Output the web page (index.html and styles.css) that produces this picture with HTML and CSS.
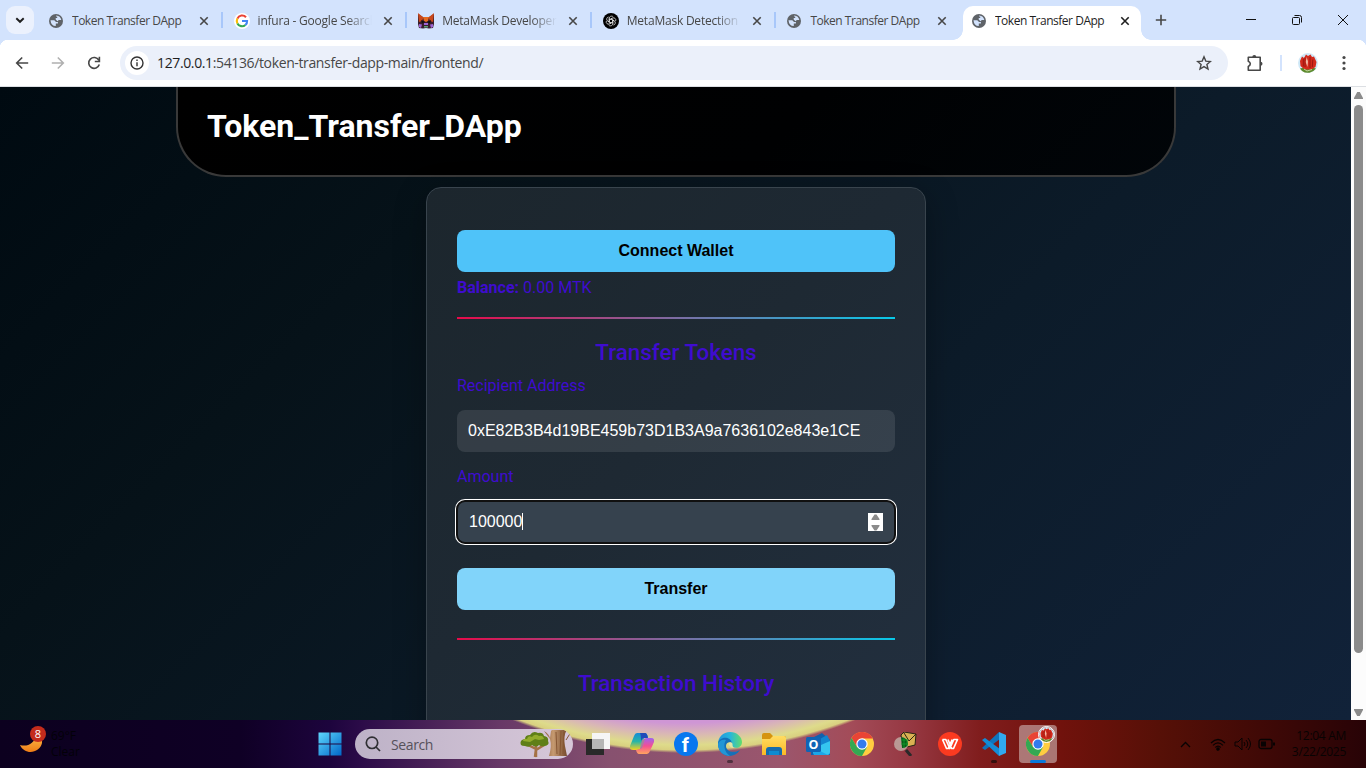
FILE: index.html
```html
<!DOCTYPE html>
<html lang="en">
<head>
<meta charset="utf-8">
<title>Token Transfer DApp</title>
<link rel="stylesheet" href="styles.css">
</head>
<body>
<svg class="defs" width="0" height="0">
  <defs>
    <linearGradient id="win" x1="0" y1="0" x2="1" y2="1"><stop offset="0" stop-color="#5fd7fd"/><stop offset="1" stop-color="#0067c8"/></linearGradient>
    <linearGradient id="moon" x1="0" y1="0" x2="0" y2="1"><stop offset="0" stop-color="#ffc04d"/><stop offset="1" stop-color="#ee7d16"/></linearGradient>
    <linearGradient id="edgeA" x1="0" y1="0" x2="1" y2="0"><stop offset="0" stop-color="#2395dd"/><stop offset=".5" stop-color="#26b5dc"/><stop offset="1" stop-color="#62dd6b"/></linearGradient>
    <linearGradient id="folder" x1="0" y1="0" x2="0" y2="1"><stop offset="0" stop-color="#ffdc62"/><stop offset="1" stop-color="#fbb924"/></linearGradient>
    <linearGradient id="copA" x1="0" y1="0" x2="0" y2="1"><stop offset="0" stop-color="#168bd8"/><stop offset=".5" stop-color="#29b5a6"/><stop offset="1" stop-color="#f5d021"/></linearGradient>
    <linearGradient id="copB" x1="0" y1="0" x2="0" y2="1"><stop offset="0" stop-color="#9d62ef"/><stop offset=".5" stop-color="#f44f93"/><stop offset="1" stop-color="#ffa55d"/></linearGradient>
    <linearGradient id="trunk" x1="0" y1="0" x2="1" y2="0"><stop offset="0" stop-color="#8a5c3c"/><stop offset=".4" stop-color="#c69a70"/><stop offset="1" stop-color="#764a2d"/></linearGradient>
    <symbol id="globe" viewBox="0 0 14 14"><circle cx="7" cy="7" r="7" fill="#5f6368"/><path d="M1.500 6.300h3.800l1.700 1.600h1.900v1.700H6.800v2.500Q2 12 1.500 6.300M7.200 1.600q4.300.4 5.100 4.400H9.800L8.500 7.200 6.700 5.400V4h1.500V2.600H7z" fill="#d3e3fd"/></symbol>
    <symbol id="x" viewBox="0 0 10 10"><path d="M1.300 1.300 8.700 8.700M8.700 1.300 1.300 8.700" stroke="currentColor" stroke-width="1.600"/></symbol>
    <symbol id="chrome" viewBox="0 0 24 24"><circle cx="12" cy="12" r="12" fill="#ffcd40"/><path d="M12 6.500h10.700A12 12 0 0 0 1.600 6L7 15z" fill="#e94435"/><path d="M1.600 6A12 12 0 0 0 12 24l5-9-5-3-5 3z" fill="#34a853"/><circle cx="12" cy="12" r="5.700" fill="#fff"/><circle cx="12" cy="12" r="4.500" fill="#337bed"/></symbol>
    <symbol id="tulip" viewBox="0 0 20 20"><circle cx="10" cy="10" r="10" fill="#cfe8f7"/><path d="M2 15.500Q10 13 18 15.500A10 10 0 0 1 4 18z" fill="#5d8a2c"/><path d="M2 8 4 3.500 6 5l2-3.500L10 3l2.500-1.500L14 4l2-.5L18.500 9l-1 5-4 2.500h-7L2.500 13z" fill="#d32a1c"/><path d="M8.700 4 10 8.500 9.500 14 7.600 9z" fill="#f3b7a3"/><path d="M5.300 6v7.500M12 4v11M14.800 6.500 14.300 14M7 4.500v9.500" stroke="#8d120e" stroke-width=".8"/><path d="m6 16 3 2 5-1.500" stroke="#c3d49b" fill="none"/></symbol>
  </defs>
</svg>

<div class="screen">
  <header class="tabstrip">
    <div class="tab-search"><svg width="10" height="10" viewBox="0 0 10 10"><path d="m1.300 3.200 3.700 3.600 3.700-3.600" fill="none" stroke="#1f1f1f" stroke-width="1.900"/></svg></div>
    <div class="tabs">
      <div class="tab"><svg class="fav"><use href="#globe"/></svg><span class="tab-title">Token Transfer DApp</span><svg class="close"><use href="#x"/></svg></div>
      <div class="tab"><svg class="fav big" viewBox="0 0 16 16"><circle cx="8" cy="8" r="8" fill="#fff"/><g fill="none" stroke-width="2.100"><path d="M12 4.200A5.200 5.200 0 0 0 3.400 5.600" stroke="#ea4335"/><path d="M3.400 5.600a5.200 5.200 0 0 0 0 4.800" stroke="#fbbc05"/><path d="M3.400 10.400a5.200 5.200 0 0 0 8 1.600" stroke="#34a853"/><path d="M11.400 12A5 5 0 0 0 13.100 8H8" stroke="#4285f4"/></g></svg><span class="tab-title fade">infura - Google Search</span><svg class="close"><use href="#x"/></svg></div>
      <div class="tab"><svg class="fav big" viewBox="0 0 16 16"><path d="m0 1 5 3h6l5-3v10l-1 4-4 .5-3-.5-3 .5-4-.5-1-4z" fill="#3a1d2c"/><path d="m0 0 5.500 4.500L4 8 1 9zM16 0l-5.500 4.500L12 8l3 1z" fill="#c9481c"/><path d="M5 4h6l-1 4-2 1-2-1z" fill="#e66a20"/><path d="m3 7 4 2-3 1.500zm10 0L9 9l3 1.500z" fill="#100c12"/><path d="m1 11 3 .5-1 3.500-2-1zm14 0-3 .5 1 3.500 2-1zM6 10h4v2H6z" fill="#9c63d4"/><path d="M6 13h4v1.500H6z" fill="#5aa078"/></svg><span class="tab-title fade">MetaMask Developer</span><svg class="close"><use href="#x"/></svg></div>
      <div class="tab"><svg class="fav big" viewBox="0 0 16 16"><circle cx="8" cy="8" r="8" fill="#000"/><g fill="none" stroke="#e8e8e8" stroke-width=".7"><path id="petal" d="M6.300 9V5.200a2.200 2.200 0 0 1 4-1.200M6.300 6.900 9.500 5"/><use href="#petal" transform="rotate(60 8 8)"/><use href="#petal" transform="rotate(120 8 8)"/><use href="#petal" transform="rotate(180 8 8)"/><use href="#petal" transform="rotate(240 8 8)"/><use href="#petal" transform="rotate(300 8 8)"/></g></svg><span class="tab-title fade">MetaMask Detection</span><svg class="close"><use href="#x"/></svg></div>
      <div class="tab"><svg class="fav"><use href="#globe"/></svg><span class="tab-title">Token Transfer DApp</span><svg class="close"><use href="#x"/></svg></div>
      <div class="tab active"><svg class="fav"><use href="#globe"/></svg><span class="tab-title">Token Transfer DApp</span><svg class="close"><use href="#x"/></svg></div>
    </div>
    <svg class="newtab" width="12" height="12" viewBox="0 0 12 12"><path d="M6 .8v10.400M.8 6h10.400" stroke="#474747" stroke-width="1.600"/></svg>
    <div class="window-controls">
      <svg width="12" height="12"><path d="M1 5.500h10" stroke="#111"/></svg>
      <svg width="12" height="12" fill="none" stroke="#111"><rect x="1.500" y="3.500" width="7" height="7" rx="1"/><path d="M3.500 1.500h5a2 2 0 0 1 2 2v5"/></svg>
      <svg width="12" height="12"><path d="m1 1 10 10M11 1 1 11" stroke="#111"/></svg>
    </div>
  </header>

  <div class="toolbar">
    <svg width="14" height="14" class="nav"><path d="M13.200 7H2M7.200 1.500 1.700 7l5.500 5.500" fill="none" stroke="#474747" stroke-width="1.600"/></svg>
    <svg width="14" height="14" class="nav"><path d="M.8 7H12M6.800 1.500 12.300 7l-5.500 5.500" fill="none" stroke="#b0b0b0" stroke-width="1.600"/></svg>
    <svg width="14" height="14" class="nav"><path d="M11.800 4.200A5.400 5.400 0 1 0 12.300 8.500M12.400.8v4.700H7.800" fill="none" stroke="#474747" stroke-width="1.600"/></svg>
    <div class="omnibox">
      <span class="site-info"><svg width="14" height="14" fill="none" stroke="#333" stroke-width="1.400"><circle cx="7" cy="7" r="6"/><path d="M7 6.200v4M7 3.400v1.600"/></svg></span>
      <span class="url"><b>127.0.0.1</b>:54136/token-transfer-dapp-main/frontend/</span>
      <svg class="star" width="16" height="16"><path d="m8 1.800 1.800 4.300 4.600.4-3.500 3 1.100 4.500L8 11.600 4 14l1.100-4.500-3.500-3 4.600-.4z" fill="none" stroke="#474747" stroke-width="1.400"/></svg>
    </div>
    <svg class="puzzle" width="18" height="18"><path d="M2.300 3.300h11.900v12.900H2.300v-3.800q2-.9 2-2.600t-2-2.600z" fill="none" stroke="#474747" stroke-width="1.600" stroke-linejoin="round"/><path d="M6.300 3a2 2 0 0 1 4 0zM14.500 7.700a2 2 0 0 1 0 4z" fill="#474747"/></svg>
    <i class="divider"></i>
    <svg class="profile" width="20" height="20"><use href="#tulip"/></svg>
    <svg class="dots" width="4" height="16" fill="#474747"><circle cx="2" cy="2.500" r="1.600"/><circle cx="2" cy="8" r="1.600"/><circle cx="2" cy="13.500" r="1.600"/></svg>
  </div>

  <div class="viewport">
    <main class="page">
      <div class="banner"><h1>Token_Transfer_DApp</h1></div>
      <section class="card">
        <div class="button">Connect Wallet</div>
        <p class="balance"><strong>Balance:</strong> 0.00 MTK</p>
        <div class="rule"></div>
        <h2>Transfer Tokens</h2>
        <label>Recipient Address</label>
        <div class="field">0xE82B3B4d19BE459b73D1B3A9a7636102e843e1CE</div>
        <label class="second">Amount</label>
        <div class="field focused"><span class="typed">100000</span><svg class="spinner" width="15" height="18"><rect width="15" height="18" fill="#fff"/><path d="M3.500 7h8V6l-3-4.500h-2l-3 4.500zM3.500 12h8v1l-3 4.500h-2l-3-4.500z" fill="#8b8b8b"/></svg></div>
        <div class="button hover">Transfer</div>
        <div class="rule last"></div>
        <h2 class="history">Transaction History</h2>
      </section>
    </main>
    <aside class="scrollbar">
      <svg width="9" height="7"><path d="M0 7V6L3.200 0h2.600L9 6v1z" fill="#8b8b8b"/></svg>
      <div class="thumb"></div>
      <svg width="9" height="7"><path d="M0 0v1l3.200 6h2.600L9 1V0z" fill="#8b8b8b"/></svg>
    </aside>
  </div>

  <footer class="taskbar">
    <div class="weather">
      <svg class="moon" width="24" height="30"><path d="M0 19C7 21 15 18 16 8Q23 10 22 17C20 27 5 30 0 19z" fill="url(#moon)"/></svg>
      <span class="badge">8</span>
      <div class="weather-text"><span>69°F</span><span>Clear</span></div>
    </div>
    <svg class="start" width="24" height="24" viewBox="0 0 24 24"><path d="M.5.5h11v11H.5zM12.500.5h11v11h-11zM.5 12.500h11v11H.5zM12.500 12.500h11v11h-11z" fill="url(#win)"/></svg>
    <div class="search">
      <svg width="16" height="16" fill="none" stroke="#303034" stroke-width="1.700"><circle cx="7" cy="6.800" r="5.700"/><path d="m11 11 4 4"/></svg>
      <span>Search</span>
      <svg class="trees" width="54" height="30" viewBox="0 0 54 30">
        <path d="m15 28 1-8-8-4m8 5 8-5m-8 1v11" stroke="#a47145" stroke-width="2.500" fill="none"/>
        <path d="M1 16q-2-5 4-6 0-4 5-4 3-5 8-2 5-1 6 3 5 1 4 5 2 4-3 5-4 1-6-1-3 3-7 0-3 3-7 1-3 0-4-1" fill="#5f7f18"/><path d="M3 12q0-3 4-2 1-4 5-2 3-4 7-1 4-1 5 3l-5 1-4-1-5 3z" fill="#93ac2c"/>
        <path d="m31 2 1-1h15q-4 5-2 16l2 10H29q3-10 1-17l-6-8q5 3 6 7z" fill="url(#trunk)"/><path d="m36 3 1 22m4-23-1 24m4-23-1 22M51 3l-5 8" stroke="#865633" fill="none"/>
      </svg>
    </div>
    <div class="apps">
      <svg viewBox="0 0 24 24"><path d="M6 1h18v16H6z" fill="#f5f5f5"/><path d="M0 7h18v16H0z" fill="#292929"/><path d="M6 7h12v10H6z" fill="#b5b5b5"/></svg>
      <svg viewBox="0 0 24 24"><path d="M7 1h8q2 0 3 4l-4 1-3 9q-1 3-4 3H3q-4 0-3-4l4-10q1-3 3-3z" fill="url(#copA)"/><path d="M10 1h5q2 0 3 5h-4q-2 0-3 3 0-6-1-8" fill="#214bb9"/><path d="M17 22H9q-2 0-3-4l4-1 3-9q1-2 4-2h4q4 0 3 4l-4 9q-1 3-3 3z" fill="url(#copB)"/><path d="m12 8 3-1-3 9-2 1z" fill="#a87f9b"/></svg>
      <svg viewBox="0 0 24 24"><circle cx="12" cy="12" r="12" fill="#0877ef"/><text x="7.800" y="19.500" font-size="20" font-family="Roboto" font-weight="700" fill="#fff">f</text></svg>
      <svg viewBox="0 0 24 24"><path d="M0 12C0 5 5 0 12 0s12 5 12 10c0 5-5 7-9 5-2-1 0-2-1-4-2-5-12-3-14 4z" fill="url(#edgeA)"/><path d="M0 12c0-7 12-9 14-1-3-2-6 0-6 3 0 5 7 8 14 4-4 6-10 7-15 5-4-2-7-6-7-11" fill="#1570b8"/><path d="M8 8c-3 4-2 12 4 16-7 0-12-5-12-12 1-3 4-5 8-4" fill="#2296d6"/><path d="M14 11c-2-2-4 0-3 2s3 3 5 2.500c-2-1-1-2-2-4.500" fill="#dfe5a8"/></svg>
      <svg viewBox="0 0 24 24"><path d="M0 3q0-2 2-2h6l3 3h11q2 0 2 2v5H0z" fill="#d5940e"/><path d="M0 7h8l3-3h11q2 0 2 2v17H0z" fill="url(#folder)"/><path d="M4 23v-5q0-3 3-3h10q3 0 3 3v5z" fill="#156cac"/><path d="M7 19h10v4H7z" fill="#0d8bd1"/></svg>
      <svg viewBox="0 0 24 24"><path d="M4 7 16 1l8 7v15H5z" fill="#1261ad"/><path d="m7 11 14-8 3 6-12 8z" fill="#1385d0"/><path d="m6 17 18-8v11q0 3-3 3H8z" fill="#35c5f0"/><path d="m6 15 16 8H8z" fill="#1ba6e8"/><rect y="5" width="15" height="15" rx="1.500" fill="#1064b5"/><text x="2.600" y="16.800" font-size="12.500" font-family="Open Sans" font-weight="700" fill="#fff">O</text></svg>
      <svg><use href="#chrome"/></svg>
      <svg viewBox="0 0 24 24"><path d="m7 3 3-3 12 2-1 11-12 3z" fill="#d9b152" stroke="#282414"/><path d="m10 1 5 8 7-7" fill="none" stroke="#2d2614"/><circle cx="7" cy="12" r="7" fill="#b99994"/><path d="M7 5q7 1 7 7-1 4-6 4z" fill="#075e17"/><path d="M7 8h7M7 12h7M10 6v10m3-9v7" stroke="#18a72e" stroke-width=".7"/><path d="m12 18 5 6" stroke="#292929" stroke-width="3"/></svg>
      <svg viewBox="0 0 24 24"><circle cx="12" cy="12" r="12" fill="#fb3a20"/><path d="M4.500 7.500h3.300l4 9 4-9h3.700l-4 9h-1.800L10 7.500M4.500 7.500l4 9h1.700l4-9" fill="none" stroke="#fff" stroke-width="1.700" stroke-linejoin="round"/></svg>
      <svg viewBox="0 0 24 24"><path d="m17 0 1 7L3 18l-3-2z" fill="#0f74bd"/><path d="m0 8 3-2 15 11-1 7z" fill="#148cd6"/><path d="m17 0 7 3v18l-7 3z" fill="#32a9ef"/></svg>
      <div class="current"><svg><use href="#chrome"/></svg><svg class="mini" viewBox="0 0 20 20"><use href="#tulip"/></svg><i></i></div>
    </div>
    <i class="running edge-run"></i><i class="running code-run"></i>
    <div class="tray">
      <svg width="11" height="7"><path d="m1 6 4.500-4.500L10 6" fill="none" stroke="#080303" stroke-width="1.300"/></svg>
      <svg class="wifi" width="16" height="13" fill="none" stroke="#080303" stroke-width="1.200"><path d="M1 5q7-7 14 0M3 7.300q5-5 10 0M5.300 9.500q2.700-2.700 5.400 0"/><circle cx="8" cy="11" r="1.200" fill="#080303"/></svg>
      <svg class="vol" width="17" height="14" fill="none" stroke="#080303"><path d="M1 5h3l4-4v12L4 9H1zM10 5q2 2 0 4m2-6q3.500 4 0 8m2-10q5 6 0 12"/></svg>
      <svg class="battery" width="17" height="12"><rect x="1" y="1.500" width="13" height="9" rx="2" fill="none" stroke="#080303" stroke-width="1.300"/><path d="M3 3.500h5v5H3zM15 4.500h2v3h-2z" fill="#080303"/></svg>
      <div class="clock"><span>12:04 AM</span><span>3/22/2025</span></div>
    </div>
  </footer>
</div>
</body>
</html>
```

FILE: styles.css
```css
* { box-sizing: border-box; }
body { margin: 0; font-family: "Open Sans", sans-serif; overflow: hidden; }
svg { display: block; flex: none; }
.defs { position: absolute; }
.screen { width: 1366px; height: 768px; display: flex; flex-direction: column; background: #fff; }

/* Tab strip */
.tabstrip { height: 40px; flex: none; display: flex; align-items: center; background: #d3e3fd; padding-left: 6px; }
.tab-search { width: 28px; height: 28px; border-radius: 9px; background: #ebf1fd; display: grid; place-items: center; }
.tabs { display: flex; align-self: stretch; padding: 6px 0 0 5px; }
.tab { width: 184.600px; flex: none; height: 34px; display: flex; align-items: center; padding: 0 15px 5px 10px; color: #474747; position: relative; }
.tab:not(.active)::after { content: ""; position: absolute; right: 1px; top: 6px; width: 2px; height: 16px; background: #a8c7fa; }
.tab:nth-child(5)::after { display: none; }
.fav { width: 14px; height: 14px; margin-right: 9px; }
.fav.big { width: 16px; height: 16px; margin: 0 8px 0 0; }
.tab-title { flex: 1; font-size: 12px; letter-spacing: -.48px; white-space: nowrap; overflow: hidden; }
.tab-title.fade { letter-spacing: -.22px; -webkit-mask-image: linear-gradient(90deg, #000 78%, transparent 100%); mask-image: linear-gradient(90deg, #000 78%, transparent 100%); }
.close { width: 10px; height: 10px; margin-left: 11px; }
.tab.active { width: 178px; margin-left: 1px; padding: 0 11px 5px 9px; background: #fff; border-radius: 10px 10px 0 0; color: #1f1f1f; }
.tab.active::before, .tab.active::after { content: ""; position: absolute; bottom: 0; width: 10px; height: 10px; }
.tab.active::before { left: -10px; background: radial-gradient(circle at 0 0, transparent 9.500px, #fff 10px); }
.tab.active::after { right: -10px; top: auto; background: radial-gradient(circle at 100% 0, transparent 9.500px, #fff 10px); }
.newtab { margin-left: 14px; }
.window-controls { margin-left: auto; display: flex; gap: 34px; padding-right: 17px; }

/* Toolbar */
.toolbar { height: 47px; flex: none; display: flex; align-items: center; padding: 0 20px 1px 15px; border-bottom: 1px solid #dcdfe3; background: radial-gradient(circle at 8px 8px, #fff 8px, #d3e3fd 8.500px) 0 0 / 8px 8px no-repeat, radial-gradient(circle at 0 8px, #fff 8px, #d3e3fd 8.500px) 100% 0 / 8px 8px no-repeat, #fff; }
.nav { margin-right: 22px; }
.omnibox { width: 1108px; height: 34px; margin-left: -3px; border-radius: 17px; background: #ebf0fa; display: flex; align-items: center; padding: 0 16px 0 5px; }
.site-info { width: 24px; height: 24px; border-radius: 50%; background: #fff; display: grid; place-items: center; }
.url { flex: 1; margin-left: 8px; font-size: 14px; letter-spacing: -.37px; color: #474747; }
.url b { font-weight: 400; color: #1f1f1f; }
.puzzle { margin-left: 18px; }
.divider { width: 2px; height: 16px; background: #d3e3fd; margin: 0 16px 0 16px; }
.dots { margin-left: auto; }

/* Page */
.viewport { height: 633px; flex: none; display: flex; overflow: hidden; }
.page { width: 1351px; height: 633px; overflow: hidden; font-family: Roboto, sans-serif; color: #3f0ccf; background: linear-gradient(135deg, #000a11 0%, #061219 28%, #0c1b29 62%, #112239 100%); }
.banner { width: 1000px; height: 90px; margin-left: 176px; padding: 20px 29px; border: 2px solid #393939; border-top: 0; border-radius: 0 0 50px 50px; background: linear-gradient(135deg, #000, #000102 60%, #010509); }
.banner h1 { margin: 0; font-size: 32px; line-height: 38px; color: #fff; font-weight: 700; }
.card { width: 500px; height: 700px; margin: 10px 0 0 426px; padding: 42px 30px; border: 1px solid #39444d; border-radius: 15px; background: linear-gradient(135deg, #1c262d 0%, #1e2933 40%, #233142 100%); box-shadow: 0 8px 32px rgba(0,0,0,.3); }
.button { height: 42px; border-radius: 8px; background: #4fc3f9; color: #000; text-align: center; font: 700 16px/42px "Liberation Sans", Arial, sans-serif; }
.button.hover { background: #81d4fa; margin-top: 25px; }
.balance { margin: 6px 0 20px; font-size: 16px; line-height: 19px; }
.rule { height: 2px; background: linear-gradient(90deg, #e60b4a, #7c6ca3 50%, #08c8e8); }
.rule.last { margin-top: 28px; }
.card h2 { margin: 20px 0 10px; height: 27px; text-align: center; font-size: 22.400px; line-height: 27px; font-weight: 500; }
.card label { display: block; font-size: 16px; line-height: 19px; margin-bottom: 15px; }
.card label.second { margin-top: 15px; }
.field { height: 42px; border-radius: 8px; background: rgba(255,255,255,.1); color: #fff; padding: 0 12px 0 11px; font: 16px/41px "Liberation Sans", Arial, sans-serif; }
.field.focused { padding-left: 12px; outline: 2px solid #101010; outline-offset: -1px; box-shadow: 0 0 0 2px #fff; display: flex; align-items: center; justify-content: space-between; background: #36424e; }
.typed { border-right: 1px solid #fff; line-height: 17px; margin-bottom: 1px; }
.card h2.history { margin-top: 30px; }

.scrollbar { width: 15px; background: #fcfcfc; display: flex; flex-direction: column; align-items: center; padding: 5px 0 4px; }
.thumb { width: 9px; height: 548px; margin: 6px 0 auto; border-radius: 5px; background: #8b8b8b; }

/* Taskbar */
.taskbar { height: 48px; flex: none; display: flex; align-items: center; position: relative; overflow: hidden;
  background:
    radial-gradient(circle at 684px -434px, #cf96d5 0, #cf96d5 437px, #d9b7b5 448px, #dedb8b 459px, #d9d080 464px, rgba(217,208,128,0) 467px),
    linear-gradient(90deg, #0c001f 0, #0f0025 240px, #1d043d 330px, #2b0b48 360px, #673867 500px, #87516f 610px, #9b566d 780px, #a34c59 850px, #963842 910px, #801d1d 980px, #71120c 1060px, #561007 1160px, #400906 1260px, #280306 100%); }
.weather { width: 298px; height: 48px; margin-left: 20px; display: flex; position: relative; }
.moon { margin-top: 6px; }
.badge { position: absolute; left: 10px; top: 6px; width: 16px; height: 16px; border-radius: 50%; background: #c42b1c; color: #fff; font-size: 11px; line-height: 16px; text-align: center; }
.weather-text { display: flex; flex-direction: column; padding: 8px 0 0 7px; font-size: 12px; line-height: 16px; color: #030008; }
.search { width: 218px; height: 30px; margin-left: 13px; display: flex; align-items: center; border-radius: 15px; padding-left: 10px; background: linear-gradient(90deg, #bdb2c7, #d7c7d9); color: #56515a; font-size: 14px; overflow: hidden; }
.search > span { margin-left: 10px; flex: 1; letter-spacing: -.38px; }
.trees { margin-right: -1px; }
.apps { display: flex; align-items: center; gap: 20px; margin-left: 13px; }
.apps > svg, .current > svg { width: 24px; height: 24px; }
.current { width: 38px; height: 38px; margin: 0 -7px; border-radius: 4px; background: rgba(210,190,190,.58); display: grid; place-items: center; position: relative; }
.apps .current .mini { position: absolute; width: 17px; height: 17px; top: 1px; right: 2px; border: 1px solid #fff; border-radius: 50%; }
.current i { position: absolute; bottom: 0; left: 11px; width: 16px; height: 3px; border-radius: 2px; background: #0879db; }
.running { position: absolute; bottom: 5px; width: 6px; height: 3px; border-radius: 2px; background: #51313f; }
.edge-run { left: 727px; }
.code-run { left: 991px; background: #35100e; }
.tray { margin-left: auto; display: flex; align-items: center; padding-right: 20px; }
.wifi { margin-left: 19px; }
.vol { margin-left: 8px; }
.battery { margin-left: 7px; }
.clock { width: 60px; margin-left: 11px; display: flex; flex-direction: column; font-size: 12px; line-height: 16px; letter-spacing: -.3px; white-space: nowrap; align-items: flex-end; color: #080303; }
```
